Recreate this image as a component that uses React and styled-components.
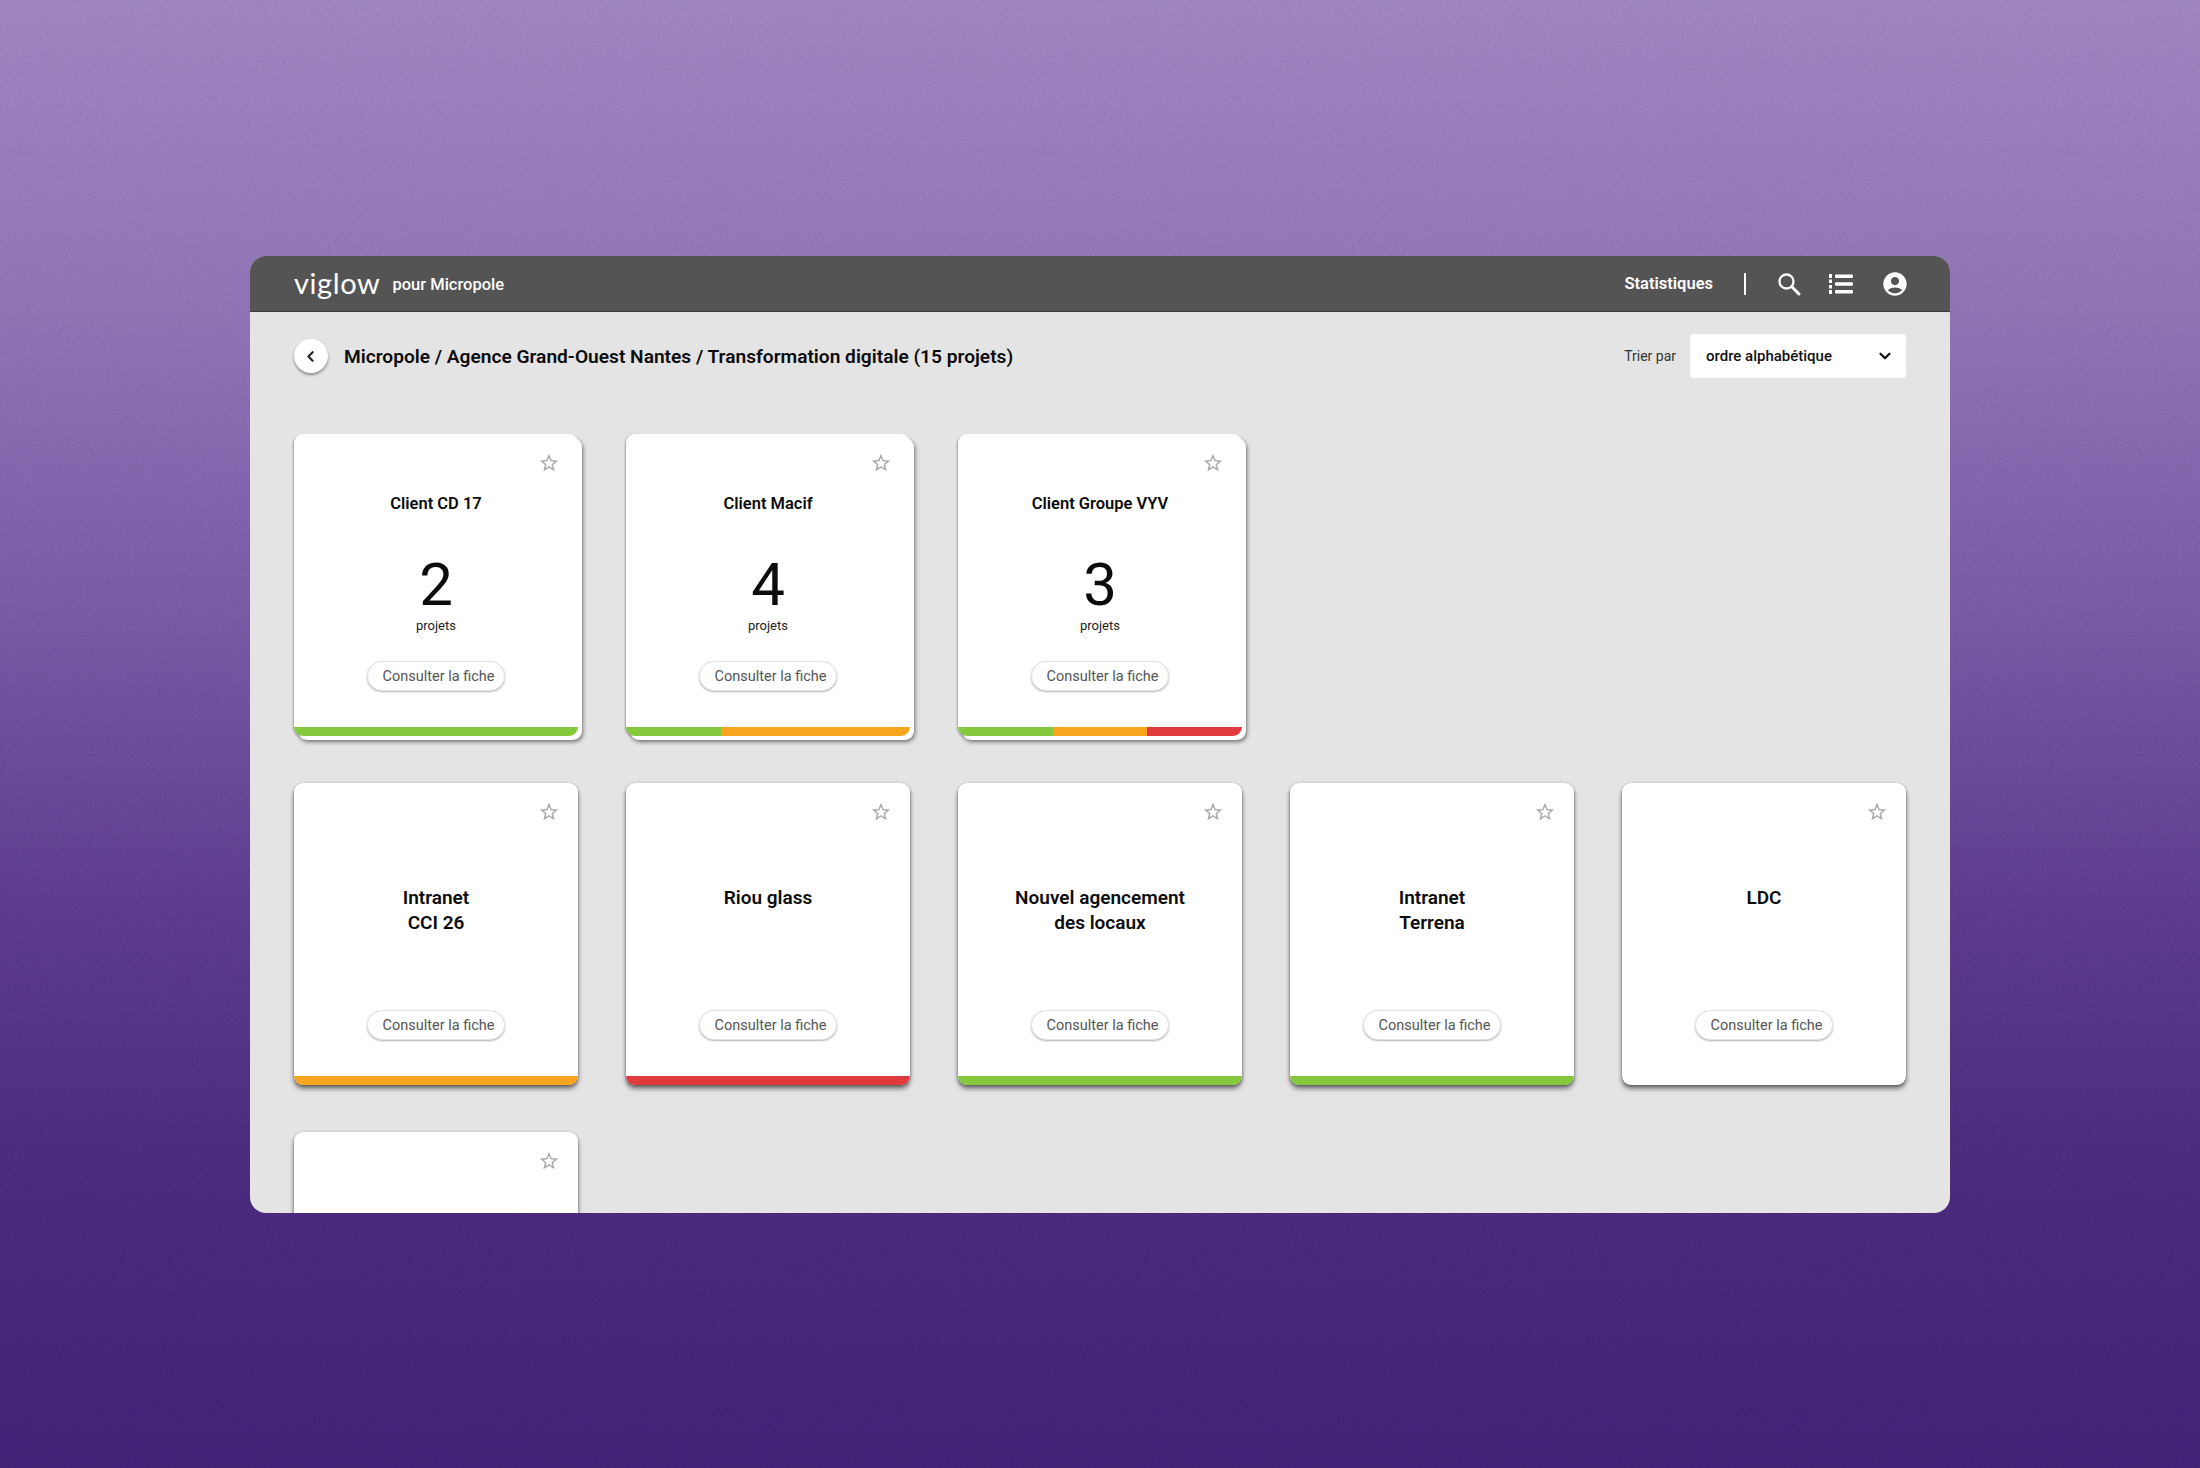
import styled, { createGlobalStyle } from "styled-components";
import { FiChevronLeft, FiChevronDown } from "react-icons/fi";
import { MdAccountCircle, MdStarBorder } from "react-icons/md";

const GREEN = "#84c83c";
const ORANGE = "#f7a51f";
const RED = "#e0393e";

const clients = [
  { name: "Client CD 17", count: 2, bar: [GREEN], stacked: true },
  { name: "Client Macif", count: 4, bar: [GREEN, ORANGE, ORANGE], stacked: true },
  { name: "Client Groupe VYV", count: 3, bar: [GREEN, ORANGE, RED], stacked: true },
  { spacer: true },
  { spacer: true },
  { name: ["Intranet", "CCI 26"], bar: [ORANGE] },
  { name: ["Riou glass"], bar: [RED] },
  { name: ["Nouvel agencement", "des locaux"], bar: [GREEN] },
  { name: ["Intranet", "Terrena"], bar: [GREEN] },
  { name: ["LDC"], bar: [] },
  { name: [], bar: [] },
];

export default function App() {
  return (
    <>
      <GlobalStyle />
      <Page>
        <Grain aria-hidden="true">
          <filter id="grain">
            <feTurbulence type="fractalNoise" baseFrequency="0.75" numOctaves="2" />
            <feColorMatrix values="0 0 0 0 0  0 0 0 0 0  0 0 0 0 0  0.9 0 0 0 -0.2" />
          </filter>
          <rect width="100%" height="100%" filter="url(#grain)" />
        </Grain>
        <AppWindow>
          <Header>
            <Brand>
              <Logo>viglow</Logo>
              <BrandSub>pour Micropole</BrandSub>
            </Brand>
            <Nav>
              <NavLink>Statistiques</NavLink>
              <NavDivider />
              <SearchIcon />
              <ListIcon />
              <MdAccountCircle size={28} />
            </Nav>
          </Header>
          <Main>
            <Toolbar>
              <BackButton>
                <FiChevronLeft size={17} strokeWidth={3} />
              </BackButton>
              <Breadcrumb>
                Micropole / Agence Grand-Ouest Nantes / Transformation digitale (15 projets)
              </Breadcrumb>
              <SortLabel>Trier par</SortLabel>
              <SortSelect>
                ordre alphabétique
                <FiChevronDown size={18} strokeWidth={3} />
              </SortSelect>
            </Toolbar>
            <Grid>
              {clients.map((client, key) =>
                client.spacer ? (
                  <div key={key} />
                ) : (
                  <Card key={key} $stacked={client.stacked}>
                    <FavStar>
                      <MdStarBorder size={22} />
                    </FavStar>
                    {client.count ? (
                      <>
                        <ClientName>{client.name}</ClientName>
                        <Count>{client.count}</Count>
                        <CountLabel>projets</CountLabel>
                      </>
                    ) : (
                      <ProjectName>
                        {client.name.map((line) => (
                          <span key={line}>{line}</span>
                        ))}
                      </ProjectName>
                    )}
                    {client.name.length > 0 && <CardButton>Consulter la fiche</CardButton>}
                    <StatusBar>
                      {client.bar.map((color, i) => (
                        <StatusPart key={i} $color={color} />
                      ))}
                    </StatusBar>
                  </Card>
                )
              )}
            </Grid>
          </Main>
        </AppWindow>
      </Page>
    </>
  );
}

function SearchIcon() {
  return (
    <svg width="24" height="24" viewBox="0 0 24 24" fill="none" stroke="#fff" strokeWidth="2.3" strokeLinecap="round">
      <circle cx="9.5" cy="9.5" r="7" />
      <path d="M14.8 14.8 L22 22" strokeWidth="3" />
    </svg>
  );
}

function ListIcon() {
  return (
    <svg width="24" height="22" viewBox="0 0 24 22" fill="#fff">
      <rect x="0" y="1" width="3" height="4" />
      <rect x="0" y="6.5" width="3" height="3.5" />
      <rect x="0" y="12" width="3" height="3.5" />
      <rect x="0" y="17" width="3" height="4" />
      <rect x="6" y="1.5" width="18" height="3.4" rx="1" />
      <rect x="6" y="9.3" width="18" height="3.4" rx="1" />
      <rect x="6" y="17.1" width="18" height="3.4" rx="1" />
    </svg>
  );
}

const GlobalStyle = createGlobalStyle`
  html, body {
    margin: 0;
    padding: 0;
  }
  body {
    font-family: Roboto, "Liberation Sans", sans-serif;
  }
`;

const Page = styled.div`
  position: relative;
  width: 2200px;
  height: 1468px;
  padding-top: 256px;
  box-sizing: border-box;
  overflow: hidden;
  background: linear-gradient(180deg, #a78dcb 0%, #997cc1 20%, #7f5fae 42%, #633f96 62%, #4f2e84 80%, #46247e 100%);
`;

const Grain = styled.svg`
  position: absolute;
  inset: 0;
  width: 100%;
  height: 100%;
  opacity: 0.22;
`;

const AppWindow = styled.div`
  position: relative;
  width: 1700px;
  height: 957px;
  margin-left: 250px;
  border-radius: 16px;
  overflow: hidden;
  background: #e4e4e4;
  display: flex;
  flex-direction: column;
`;

const Header = styled.header`
  height: 55px;
  flex: none;
  display: flex;
  justify-content: space-between;
  align-items: center;
  padding: 0 41px 0 44px;
  background: #545454;
  border-bottom: 1px solid #3c3c3c;
  color: #fff;
`;

const Brand = styled.div`
  display: flex;
  align-items: center;
  gap: 12px;
`;

const Logo = styled.span`
  font-family: Lato, sans-serif;
  font-weight: 400;
  font-size: 29px;
  letter-spacing: 0.6px;
  line-height: 1;
  margin-top: -3px;
`;

const BrandSub = styled.span`
  font-size: 16.5px;
  font-weight: 500;
  margin-top: 2px;
`;

const Nav = styled.nav`
  display: flex;
  align-items: center;
  gap: 28px;
`;

const NavLink = styled.span`
  font-size: 16.5px;
  font-weight: 600;
  margin-right: 3px;
`;

const NavDivider = styled.span`
  width: 2px;
  height: 22px;
  margin-right: 3px;
  background: #fff;
`;

const Main = styled.main`
  flex: 1;
  min-height: 0;
  padding: 22px 44px 0;
`;

const Toolbar = styled.div`
  height: 44px;
  display: flex;
  align-items: center;
`;

const BackButton = styled.button`
  width: 34px;
  height: 34px;
  padding: 0 2px 0 0;
  border: none;
  border-radius: 50%;
  background: #fff;
  color: #222;
  display: flex;
  align-items: center;
  justify-content: center;
  box-shadow: 0 2px 3px rgba(0, 0, 0, 0.4);
`;

const Breadcrumb = styled.h1`
  margin: 0 auto 0 16px;
  font-size: 19.15px;
  font-weight: 600;
  color: #0c0c0c;
`;

const SortLabel = styled.span`
  font-size: 14px;
  color: #333;
  margin-right: 14px;
`;

const SortSelect = styled.div`
  width: 216px;
  height: 44px;
  box-sizing: border-box;
  padding: 0 12px 0 16px;
  display: flex;
  align-items: center;
  justify-content: space-between;
  background: #fff;
  border-radius: 3px;
  font-size: 15px;
  font-weight: 500;
  color: #111;
`;

const Grid = styled.div`
  margin-top: 56px;
  display: grid;
  grid-template-columns: repeat(5, 284px);
  grid-auto-rows: 302px;
  column-gap: 48px;
  row-gap: 47px;
`;

const Card = styled.article`
  position: relative;
  height: 302px;
  box-sizing: border-box;
  display: flex;
  flex-direction: column;
  align-items: center;
  background: #fff;
  border-radius: 9px;
  box-shadow: ${(p) =>
    p.$stacked
      ? "4px 4px 0 #fff, 5px 6px 4px rgba(0, 0, 0, 0.5), -1px 1px 2px rgba(0, 0, 0, 0.3)"
      : "0 4px 5px rgba(0, 0, 0, 0.45), 0 1px 3px rgba(0, 0, 0, 0.35)"};
`;

const FavStar = styled.span`
  position: absolute;
  top: 18px;
  right: 18px;
  color: #a9a9a9;
  display: flex;
`;

const ClientName = styled.h2`
  margin: 58px 0 0;
  font-size: 16.5px;
  line-height: 24px;
  font-weight: 600;
  color: #0c0c0c;
`;

const Count = styled.div`
  margin-top: 37px;
  font-size: 60px;
  line-height: 64px;
  font-weight: 400;
  color: #0c0c0c;
`;

const CountLabel = styled.div`
  font-size: 13px;
  line-height: 18px;
  font-weight: 400;
  color: #222;
`;

const ProjectName = styled.h2`
  margin: 102px 0 0;
  font-size: 19px;
  line-height: 25px;
  font-weight: 600;
  color: #0c0c0c;
  text-align: center;
  display: flex;
  flex-direction: column;
`;

const CardButton = styled.button`
  position: absolute;
  top: 227px;
  left: 73px;
  width: 138px;
  height: 30px;
  padding: 0 0 0 5px;
  border: 1px solid #e2e2e2;
  border-radius: 15px;
  background: #fff;
  box-shadow: 0 1px 2px rgba(0, 0, 0, 0.3);
  font-family: inherit;
  font-size: 14.5px;
  color: #555;
`;

const StatusBar = styled.div`
  position: absolute;
  left: 0;
  right: 0;
  bottom: 0;
  height: 9px;
  display: flex;
  overflow: hidden;
  border-radius: 0 0 9px 9px;
`;

const StatusPart = styled.span`
  flex: 1;
  background: ${(p) => p.$color};
`;
